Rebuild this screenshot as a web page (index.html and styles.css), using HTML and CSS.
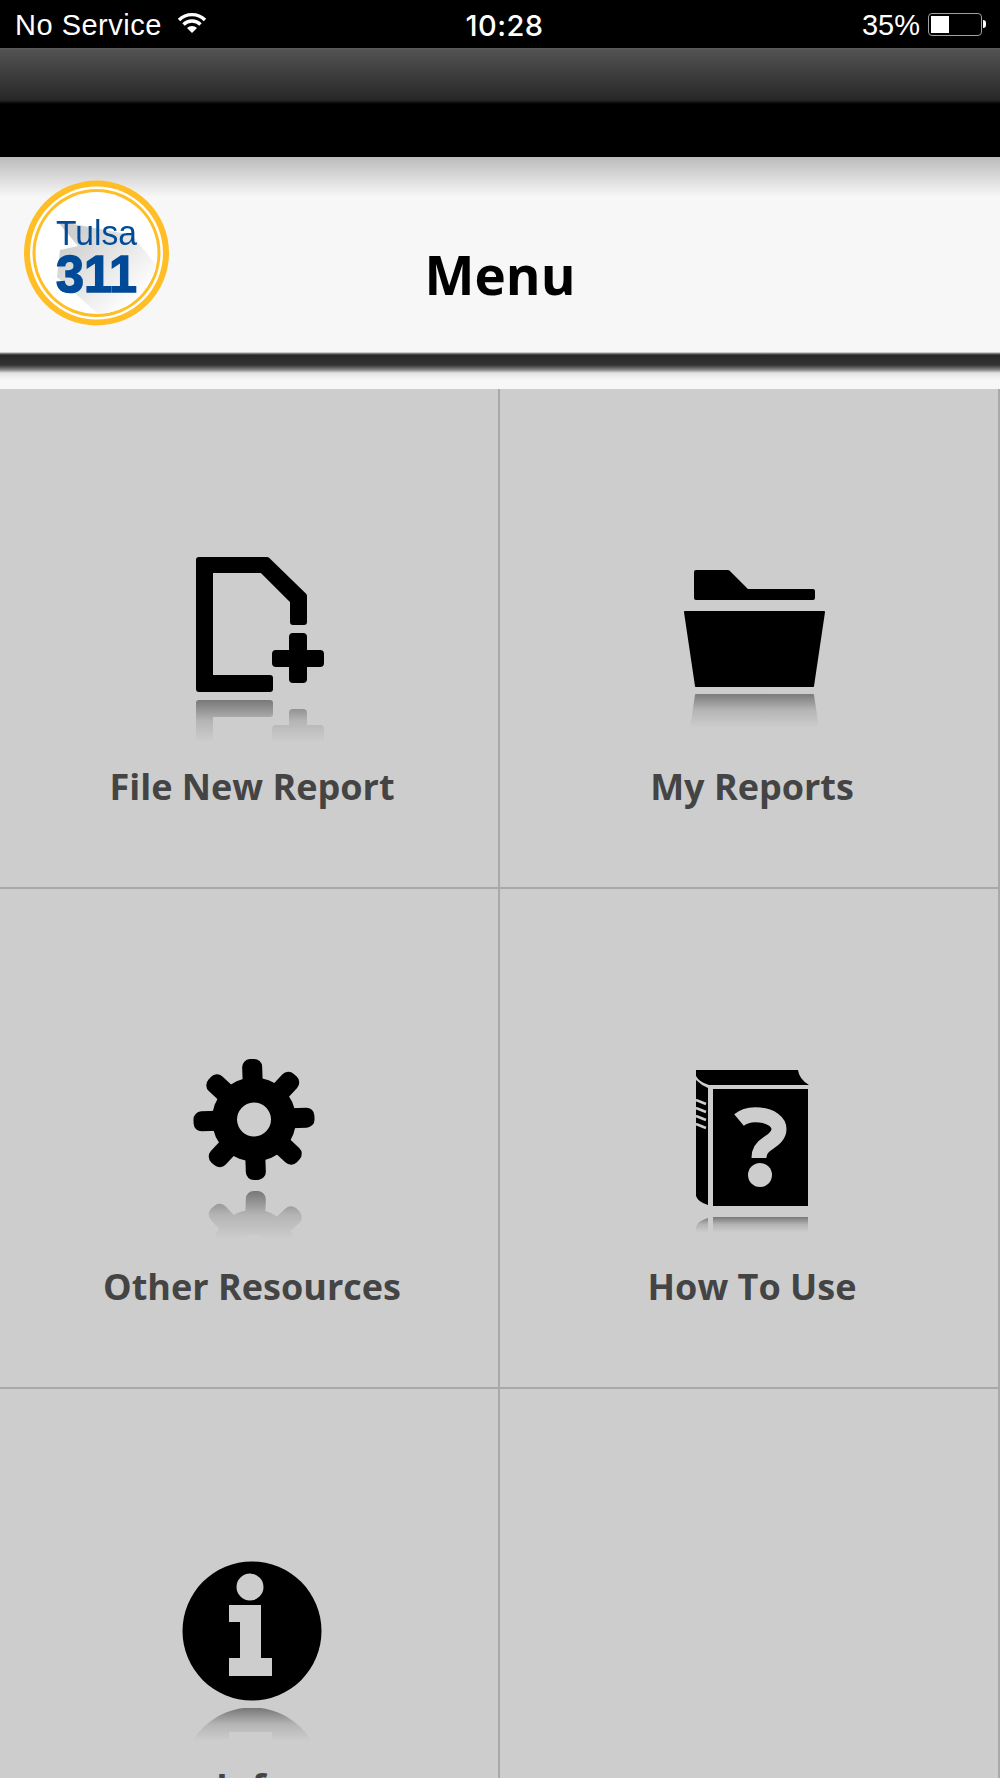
FILE: index.html
```html
<!DOCTYPE html>
<html lang="en">
<head>
    <meta charset="UTF-8">
    <meta name="viewport" content="width=device-width, initial-scale=1.0">
    <title>Tulsa 311 - Menu</title>
    <link rel="stylesheet" href="styles.css">
</head>
<body>
    <!-- Status bar -->
    <div class="status-bar">
        <div class="status-left">
            <span class="carrier">No Service</span>
            <svg class="wifi" width="30" height="22" viewBox="0 0 30 22">
                <path d="M15 21 L10 16 A7 7 0 0 1 20 16 Z" fill="#fff"/>
                <path d="M6.5 12.5 A12 12 0 0 1 23.500 12.500" fill="none" stroke="#fff" stroke-width="3.400"/>
                <path d="M2 8 A18.500 18.500 0 0 1 28 8" fill="none" stroke="#fff" stroke-width="3.400"/>
            </svg>
        </div>
        <div class="status-time">10:28</div>
        <div class="status-right">
            <span>35%</span>
            <div class="battery"><div class="battery-level"></div></div>
            <div class="battery-tip"></div>
        </div>
    </div>

    <div class="nav-shine"></div>
    <div class="nav-dark"></div>

    <!-- Title -->
    <header class="title-bar">
        <svg class="logo" width="146" height="146" viewBox="24 180 146 146">
            <defs>
                <linearGradient id="logoShadow" x1="0" y1="0" x2="1" y2="1">
                    <stop offset="0.15" stop-color="#cfcfcf"/>
                    <stop offset="0.8" stop-color="#fff"/>
                </linearGradient>
                <clipPath id="logoClip"><circle cx="96.500" cy="253" r="61"/></clipPath>
            </defs>
            <circle cx="96.500" cy="253" r="72.500" fill="#ffbe26"/>
            <circle cx="96.500" cy="253" r="66.500" fill="#fff"/>
            <circle cx="96.500" cy="253" r="64" fill="#ffbe26"/>
            <circle cx="96.500" cy="253" r="61" fill="#fff"/>
            <polygon points="57,221 132,235 160,270 118,318 97,313 57,277 60,250 78,246" fill="url(#logoShadow)" clip-path="url(#logoClip)"/>
            <text class="logo-tulsa" x="56" y="245" textLength="81" lengthAdjust="spacingAndGlyphs">Tulsa</text>
            <text class="logo-311" x="56" y="291.500" textLength="81" lengthAdjust="spacingAndGlyphs">311</text>
        </svg>
        <h1 class="title">Menu</h1>
    </header>
    <div class="title-shadow"></div>

    <!-- Shared fade for the reflections -->
    <svg class="svg-defs" width="0" height="0">
        <defs>
            <linearGradient id="fade" x1="0" y1="0" x2="0" y2="1">
                <stop offset="0" stop-color="#6a6a6a"/>
                <stop offset="0.45" stop-color="#1e1e1e"/>
                <stop offset="0.9" stop-color="#000"/>
            </linearGradient>
        </defs>
    </svg>

    <main class="menu-grid">
        <div class="tile">
            <svg class="tile-icon" width="200" height="210" viewBox="152 539 200 210">
                <defs>
                    <g id="iconFile">
                        <path d="M199 560 H267 L304 596 V622 H293 V601 L262 570 H210 V678 H270 V689 H199 Z" stroke="#000" stroke-width="6" stroke-linejoin="round"/>
                        <path d="M293 637 H303 V654 H320 V663 H303 V679 H293 V663 H276 V654 H293 Z" stroke="#000" stroke-width="8" stroke-linejoin="round"/>
                    </g>
                    <mask id="fadeFile" maskUnits="userSpaceOnUse" x="152" y="700" width="200" height="46">
                        <rect x="152" y="700" width="200" height="46" fill="url(#fade)"/>
                    </mask>
                </defs>
                <use href="#iconFile"/>
                <g mask="url(#fadeFile)"><use href="#iconFile" transform="translate(0 1392) scale(1 -1)"/></g>
            </svg>
            <div class="tile-label">File New Report</div>
        </div>

        <div class="tile">
            <svg class="tile-icon" width="200" height="210" viewBox="652 539 200 210">
                <defs>
                    <g id="iconFolder">
                        <path d="M696 572 H728 L747 591 H813 V598 H696 Z" stroke="#000" stroke-width="4" stroke-linejoin="round"/>
                        <path d="M685 612 H824 L813 686 H696 Z" stroke="#000" stroke-width="2" stroke-linejoin="round"/>
                    </g>
                    <mask id="fadeFolder" maskUnits="userSpaceOnUse" x="652" y="693" width="200" height="38">
                        <rect x="652" y="693" width="200" height="38" fill="url(#fade)"/>
                    </mask>
                </defs>
                <use href="#iconFolder"/>
                <g mask="url(#fadeFolder)"><use href="#iconFolder" transform="translate(0 1381) scale(1 -1)"/></g>
            </svg>
            <div class="tile-label">My Reports</div>
        </div>

        <div class="tile">
            <svg class="tile-icon" width="200" height="210" viewBox="152 1039 200 210">
                <defs>
                    <g id="iconGear">
                        <g transform="translate(254 1119.500) rotate(-2)">
                            <rect x="-10" y="-60.500" width="20" height="40" rx="8"/>
                            <rect x="-10" y="-60.500" width="20" height="40" rx="8" transform="rotate(45)"/>
                            <rect x="-10" y="-60.500" width="20" height="40" rx="8" transform="rotate(90)"/>
                            <rect x="-10" y="-60.500" width="20" height="40" rx="8" transform="rotate(135)"/>
                            <rect x="-10" y="-60.500" width="20" height="40" rx="8" transform="rotate(180)"/>
                            <rect x="-10" y="-60.500" width="20" height="40" rx="8" transform="rotate(225)"/>
                            <rect x="-10" y="-60.500" width="20" height="40" rx="8" transform="rotate(270)"/>
                            <rect x="-10" y="-60.500" width="20" height="40" rx="8" transform="rotate(315)"/>
                            <path d="M-42 0 A42 42 0 1 1 42 0 A42 42 0 1 1 -42 0 Z M-17 0 A17 17 0 1 0 17 0 A17 17 0 1 0 -17 0 Z" fill-rule="evenodd"/>
                        </g>
                    </g>
                    <mask id="fadeGear" maskUnits="userSpaceOnUse" x="152" y="1191" width="200" height="53">
                        <rect x="152" y="1191" width="200" height="53" fill="url(#fade)"/>
                    </mask>
                </defs>
                <use href="#iconGear"/>
                <g mask="url(#fadeGear)"><use href="#iconGear" transform="translate(0 2371) scale(1 -1)"/></g>
            </svg>
            <div class="tile-label">Other Resources</div>
        </div>

        <div class="tile">
            <svg class="tile-icon" width="200" height="210" viewBox="652 1039 200 210">
                <defs>
                    <g id="iconBook">
                        <path d="M696 1070 H798 Q799 1079 809 1085 H709 Q699 1082 696 1076 Z"/>
                        <path d="M696 1080 Q701 1085 708 1088 V1205 Q698 1202 696 1196 Z"/>
                        <rect x="713" y="1089" width="95" height="117"/>
                    </g>
                    <mask id="fadeBook" maskUnits="userSpaceOnUse" x="652" y="1217" width="200" height="17">
                        <rect x="652" y="1217" width="200" height="17" fill="url(#fade)"/>
                    </mask>
                </defs>
                <use href="#iconBook"/>
                <path d="M696 1100 L706 1104 M696 1108 L706 1112 M696 1116 L706 1120 M696 1124 L706 1128" stroke="#cdcdcd" stroke-width="2.500"/>
                <path d="M739 1120 C745 1115 752 1114 760 1115 C771 1116 779 1122 779 1129 C779 1137 771 1141 767 1144 C762 1147 759 1151 759 1158" fill="none" stroke="#cdcdcd" stroke-width="15"/>
                <circle cx="760" cy="1175" r="12" fill="#cdcdcd"/>
                <g mask="url(#fadeBook)"><use href="#iconBook" transform="translate(0 2423) scale(1 -1)"/></g>
            </svg>
            <div class="tile-label">How To Use</div>
        </div>

        <div class="tile">
            <svg class="tile-icon" width="200" height="210" viewBox="152 1539 200 210">
                <defs>
                    <path id="iconInfo" fill-rule="evenodd" d="M182.500 1631 A69.500 69.500 0 1 1 321.500 1631 A69.500 69.500 0 1 1 182.500 1631 Z M236.500 1587 A13.500 13.500 0 1 0 263.500 1587 A13.500 13.500 0 1 0 236.500 1587 Z M229 1605 H261 V1658 H272 V1676 H229 V1658 H240 V1622 H229 Z"/>
                    <mask id="fadeInfo" maskUnits="userSpaceOnUse" x="152" y="1708" width="200" height="36">
                        <rect x="152" y="1708" width="200" height="36" fill="url(#fade)"/>
                    </mask>
                </defs>
                <use href="#iconInfo"/>
                <g mask="url(#fadeInfo)"><use href="#iconInfo" transform="translate(0 3408) scale(1 -1)"/></g>
            </svg>
            <div class="tile-label">Info</div>
        </div>

        <div class="tile"></div>
    </main>
</body>
</html>
```

FILE: styles.css
```css
/* Global */
html, body {
    height: 1778px;
    overflow: hidden;
}

body {
    margin: 0;
    background-color: #cdcdcd;
    font-family: "Open Sans", Arial, sans-serif;
}

/* Status bar */
.status-bar {
    display: grid;
    grid-template-columns: 1fr auto 1fr;
    align-items: center;
    height: 48px;
    padding: 3px 14px 0 15px;
    box-sizing: border-box;
    background-color: #000;
    color: #fff;
    font-family: "Liberation Sans", Arial, sans-serif;
    font-size: 29px;
}

.status-left {
    display: flex;
    align-items: center;
    gap: 15px;
}

.carrier {
    letter-spacing: 0.5px;
}

.wifi {
    margin-bottom: 5px;
}

.status-time {
    font-family: Inter, "Liberation Sans", sans-serif;
    font-weight: 500;
    letter-spacing: 0.5px;
    margin-left: 8px;
}

.status-right {
    display: flex;
    align-items: center;
    justify-content: flex-end;
}

.battery {
    width: 54px;
    height: 23px;
    margin-left: 8px;
    margin-bottom: 3px;
    padding: 2px;
    box-sizing: border-box;
    border: 1px solid #a0a0a0;
    border-radius: 4px;
}

.battery-level {
    width: 18px;
    height: 100%;
    background-color: #fff;
}

.battery-tip {
    width: 3px;
    height: 8px;
    margin-left: 1px;
    margin-bottom: 3px;
    background-color: #fff;
    border-radius: 0 4px 4px 0;
}

/* Nav band */
.nav-shine {
    height: 56px;
    background: linear-gradient(#5c5c5c, #525252 4%, #272727 93%, #000);
}

.nav-dark {
    height: 53px;
    background-color: #000;
}

/* Title */
.title-bar {
    display: grid;
    grid-template-columns: 1fr auto 1fr;
    height: 195px;
    box-sizing: border-box;
    background: linear-gradient(#bbb, #f7f7f7 40px);
}

.logo {
    margin: 23px 0 0 24px;
    filter: blur(0.5px);
}

.title {
    margin: 83px 0 0;
    font-size: 53px;
    line-height: 70px;
    font-weight: bold;
    color: #000;
}

.logo-tulsa {
    font-family: "Liberation Sans", Arial, sans-serif;
    font-size: 35px;
    fill: #004a97;
}

.logo-311 {
    font-family: "Liberation Sans", Arial, sans-serif;
    font-size: 52px;
    font-weight: bold;
    fill: #004a97;
    stroke: #004a97;
    stroke-width: 1.600px;
}

.title-shadow {
    height: 37px;
    background: linear-gradient(#f7f7f7, #9a9a9a 1px, #282828 3px, #333 13px, #8a8a8a 18px, #e2e2e2 21px, #f7f7f7 28px);
}

.svg-defs {
    display: block;
}

/* Menu */
.menu-grid {
    display: grid;
    grid-template-columns: 1fr 1fr;
    grid-auto-rows: 500px;
}

.tile {
    display: flex;
    flex-direction: column;
    align-items: center;
    padding: 150px 0 0 6px;
    box-sizing: border-box;
    border-right: 2px solid #a9a9a9;
    border-bottom: 2px solid #a9a9a9;
    background-color: #cdcdcd;
}

.tile-icon {
    display: block;
    filter: blur(0.6px);
}

.tile-label {
    margin-top: 16px;
    font-size: 36px;
    line-height: 44px;
    font-weight: bold;
    color: #444;
}
```
